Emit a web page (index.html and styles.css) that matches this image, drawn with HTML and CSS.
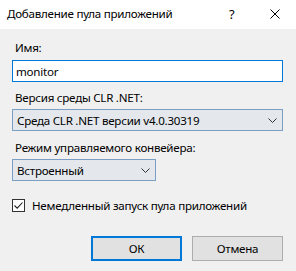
FILE: index.html
```html
<!DOCTYPE html>
<html lang="ru">
<head>
    <meta charset="UTF-8">
    <title>Добавление пула приложений</title>
    <link rel="stylesheet" href="styles.css">
</head>
<body>
    <div class="dialog">
        <div class="titlebar">
            <span class="title">Добавление пула приложений</span>
            <span class="help">?</span>
            <svg class="close" width="10" height="10" viewBox="0 0 10 10">
                <path d="M0.5 0.5 L9.5 9.5 M9.5 0.5 L0.5 9.5" stroke="#000" stroke-width="1" fill="none"/>
            </svg>
        </div>

        <div class="content">
            <label class="field-label label-name" for="pool-name">Имя:</label>
            <input type="text" id="pool-name" class="text-input" value="monitor">

            <div class="field-label label-clr">Версия среды CLR .NET:</div>
            <div class="combo combo-wide">
                <span>Среда CLR .NET версии v4.0.30319</span>
                <svg class="chevron" width="9" height="5" viewBox="0 0 9 5">
                    <path d="M0.5 0.5 L4.5 4.5 L8.5 0.5" stroke="#333" stroke-width="1" fill="none"/>
                </svg>
            </div>

            <div class="field-label label-mode">Режим управляемого конвейера:</div>
            <div class="combo combo-short">
                <span>Встроенный</span>
                <svg class="chevron" width="9" height="5" viewBox="0 0 9 5">
                    <path d="M0.5 0.5 L4.5 4.5 L8.5 0.5" stroke="#333" stroke-width="1" fill="none"/>
                </svg>
            </div>

            <div class="check-row">
                <span class="checkbox">
                    <svg width="11" height="11" viewBox="0 0 11 11">
                        <path d="M1.5 5.5 L4.2 8.2 L9.5 2.5" stroke="#222" stroke-width="1.1" fill="none"/>
                    </svg>
                </span>
                <span class="check-text">Немедленный запуск пула приложений</span>
            </div>

            <div class="buttons">
                <button class="btn btn-default">ОК</button>
                <button class="btn">Отмена</button>
            </div>
        </div>
    </div>
</body>
</html>
```

FILE: styles.css
```css
* {
    margin: 0;
    padding: 0;
    box-sizing: border-box;
}

body {
    width: 296px;
    height: 271px;
    background-color: #f0f0f0;
    font-family: "Noto Sans", "DejaVu Sans", sans-serif;
    font-size: 11.6px;
    letter-spacing: -0.25px;
    color: #000;
    overflow: hidden;
}

.titlebar {
    height: 29px;
    background-color: #fff;
    display: flex;
    align-items: center;
    padding-left: 7px;
}

.title {
    flex: 1;
    line-height: 16px;
    margin-top: -2px;
}

.help {
    width: 10px;
    margin-right: 31px;
    margin-top: -2px;
    font-size: 13px;
}

.close {
    margin-right: 16px;
    margin-top: -2px;
}

.content {
    padding: 0 13px 0 12px;
    display: flex;
    flex-direction: column;
}

.field-label {
    display: block;
    line-height: 16px;
    padding-left: 3px;
}

.label-name {
    margin-top: 11px;
    margin-bottom: 4px;
}

.label-clr {
    margin-top: 8px;
    margin-bottom: 3px;
}

.label-mode {
    margin-top: 9px;
    margin-bottom: 3px;
}

.text-input {
    height: 22px;
    width: 271px;
    border: 1px solid #0078d7;
    background: #fff;
    font: inherit;
    letter-spacing: inherit;
    padding: 0 3px;
    outline: none;
}

.combo {
    height: 22px;
    border: 1px solid #7a9ec4;
    background-color: #e4e8ed;
    display: flex;
    align-items: center;
    justify-content: space-between;
    padding: 0 5px 0 4px;
}

.combo-wide {
    width: 271px;
}

.combo-short {
    width: 144px;
}

.check-row {
    margin-top: 18px;
    display: flex;
    align-items: center;
    height: 13px;
}

.checkbox {
    width: 13px;
    height: 13px;
    border: 1px solid #333;
    background: #fff;
    display: flex;
    align-items: center;
    justify-content: center;
    margin-right: 7px;
}

.check-text {
    line-height: 16px;
}

.buttons {
    margin-top: 24px;
    display: flex;
    justify-content: flex-end;
    gap: 10px;
}

.btn {
    width: 91px;
    height: 25px;
    background-color: #e1e1e1;
    border: 1px solid #adadad;
    font: inherit;
    letter-spacing: inherit;
    color: #000;
}

.btn-default {
    border: 2px solid #0078d7;
}
```
